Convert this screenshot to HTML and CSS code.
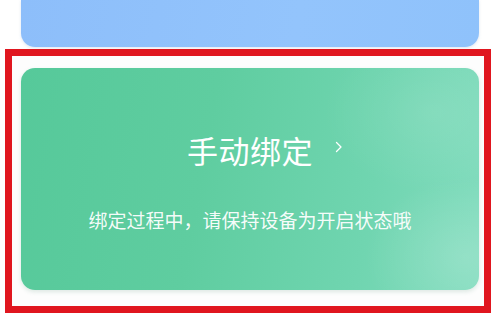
FILE: index.html
```html
<!DOCTYPE html>
<html lang="zh-CN">
<head>
    <meta charset="UTF-8">
    <title>手动绑定</title>
    <link rel="stylesheet" href="styles.css">
</head>
<body>
    <div class="auto-card"></div>

    <div class="highlight">
        <div class="bind-card">
            <div class="bind-title">
                <span class="title-text">手动绑定
                    <svg class="chevron" width="8" height="12" viewBox="0 0 8 12">
                        <polyline points="1.5,1.5 6,6 1.5,10.5" fill="none" stroke="#ffffff" stroke-width="1.3" stroke-linecap="round" stroke-linejoin="round"/>
                    </svg>
                </span>
            </div>
            <div class="bind-tip">绑定过程中，请保持设备为开启状态哦</div>
        </div>
    </div>
</body>
</html>
```

FILE: styles.css
```css
body {
    margin: 0;
    background: #ffffff;
    font-family: "Noto Sans CJK SC", "Noto Sans", sans-serif;
    overflow: hidden;
}
.auto-card {
    height: 47px;
    margin: 0 17px 0 21px;
    background: linear-gradient(100deg, #8dbefa 0%, #93c4fc 60%, #8fc2fb 100%);
    border-radius: 0 0 14px 14px;
    box-shadow: 0 1px 3px rgba(120, 150, 190, 0.25);
}
.highlight {
    margin: 2px 0 0 5px;
    width: 458px;
    height: 238px;
    border: 7px solid #e0161f;
    padding: 12px 5px 0 9px;
    background: #fdfdfd;
}
.bind-card {
    height: 222px;
    border-radius: 14px;
    background:
        radial-gradient(ellipse 110px 80px at 90% 20%, rgba(255, 255, 255, 0.1), rgba(255, 255, 255, 0)),
        radial-gradient(ellipse 100px 80px at 97% 85%, rgba(255, 255, 255, 0.16), rgba(255, 255, 255, 0)),
        linear-gradient(100deg, #56c99a 0%, #5fcda0 40%, #70d5b0 75%, #82dcbe 100%);
    box-shadow: 0 2px 4px rgba(80, 140, 110, 0.18);
    display: flex;
    flex-direction: column;
    align-items: center;
    padding-top: 62px;
    box-sizing: border-box;
    color: #ffffff;
}
.bind-title {
    font-size: 31px;
    line-height: 40px;
    letter-spacing: 0.5px;
}
.title-text {
    position: relative;
}
.chevron {
    position: absolute;
    left: 100%;
    top: 14px;
    margin-left: 22px;
}
.bind-tip {
    margin-top: 37px;
    font-size: 19px;
    line-height: 26px;
    color: rgba(255, 255, 255, 0.95);
}
```
